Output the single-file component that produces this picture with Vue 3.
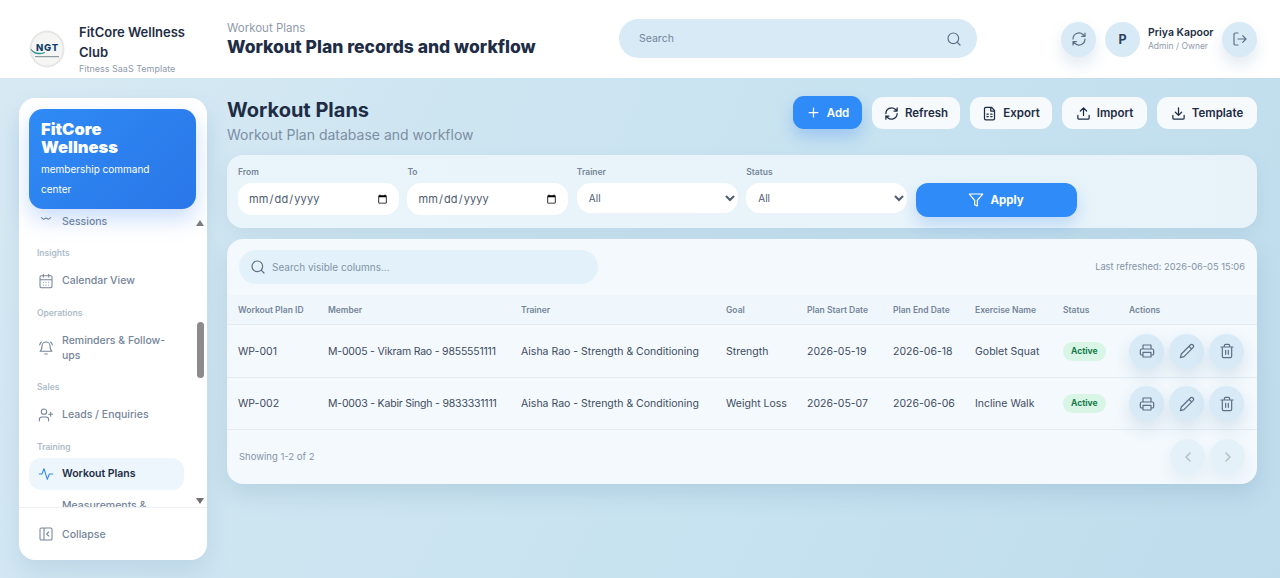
<script setup>
const navTop = [
  { label: 'Insights', items: [{ name: 'Calendar View', icon: 'calendar' }] },
  { label: 'Operations', items: [{ name: 'Reminders & Follow-ups', icon: 'bell' }] },
  { label: 'Sales', items: [{ name: 'Leads / Enquiries', icon: 'user' }] },
  { label: 'Training', items: [{ name: 'Workout Plans', icon: 'pulse', active: true }, { name: 'Measurements & Progress', icon: 'ruler' }] }
]

const actions = [
  { name: 'Refresh', icon: 'refresh' },
  { name: 'Export', icon: 'file' },
  { name: 'Import', icon: 'upload' },
  { name: 'Template', icon: 'download' }
]

const columns = ['Workout Plan ID', 'Member', 'Trainer', 'Goal', 'Plan Start Date', 'Plan End Date', 'Exercise Name', 'Status', 'Actions']

const rows = [
  { id: 'WP-001', member: 'M-0005 - Vikram Rao - 9855551111', trainer: 'Aisha Rao - Strength & Conditioning', goal: 'Strength', start: '2026-05-19', end: '2026-06-18', exercise: 'Goblet Squat', status: 'Active' },
  { id: 'WP-002', member: 'M-0003 - Kabir Singh - 9833331111', trainer: 'Aisha Rao - Strength & Conditioning', goal: 'Weight Loss', start: '2026-05-07', end: '2026-06-06', exercise: 'Incline Walk', status: 'Active' }
]

// 图标路径
const ICONS = {
  sessions: 'M5 17.500l3.500 2.500 3.500-2 3.500 2 3.500-2.500',
  calendar: 'M8 2v4M16 2v4M3 10h18M5 4h14a2 2 0 0 1 2 2v14a2 2 0 0 1-2 2H5a2 2 0 0 1-2-2V6a2 2 0 0 1 2-2zM8 14h.01M12 14h.01M16 14h.01M8 18h.01M12 18h.01M16 18h.01',
  bell: 'M6 9a6 6 0 0 1 12 0c0 5 1.500 7 3 8H3c1.500-1 3-3 3-8zM10 21h4M2.500 7.500A9 9 0 0 1 5 3M21.500 7.500A9 9 0 0 0 19 3',
  user: 'M16 21v-2a4 4 0 0 0-4-4H6a4 4 0 0 0-4 4v2M9 11a4 4 0 1 0 0-8 4 4 0 0 0 0 8zM19 8v6M22 11h-6',
  pulse: 'M2 12h4l3-8 5 16 3-8h5',
  ruler: 'M4 16 16 4l4 4L8 20zM8 12l2 2M11 9l2 2',
  refresh: 'M3 12a9 9 0 0 1 15-6.700L21 8M21 3v5h-5M21 12a9 9 0 0 1-15 6.700L3 16M3 21v-5h5',
  file: 'M15 2H6a2 2 0 0 0-2 2v16a2 2 0 0 0 2 2h12a2 2 0 0 0 2-2V7zM14 2v6h6M8 13h2M14 13h2M8 17h2M14 17h2',
  upload: 'M21 15v4a2 2 0 0 1-2 2H5a2 2 0 0 1-2-2v-4M17 8l-5-5-5 5M12 3v12',
  download: 'M21 15v4a2 2 0 0 1-2 2H5a2 2 0 0 1-2-2v-4M7 10l5 5 5-5M12 15V3',
  search: 'M11 19a8 8 0 1 0 0-16 8 8 0 0 0 0 16zM21 21l-4.300-4.300',
  logout: 'M9 21H5a2 2 0 0 1-2-2V5a2 2 0 0 1 2-2h4M16 17l5-5-5-5M21 12H9',
  filter: 'M22 3H2l8 9.500V19l4 2v-8.500z',
  plus: 'M5 12h14M12 5v14',
  printer: 'M6 9V3h12v6M6 18H4a2 2 0 0 1-2-2v-5a2 2 0 0 1 2-2h16a2 2 0 0 1 2 2v5a2 2 0 0 1-2 2h-2M6 14h12v7H6z',
  pencil: 'M17 3a2.800 2.800 0 0 1 4 4L7.500 20.500 2 22l1.500-5.500zM15 5l4 4',
  trash: 'M3 6h18M19 6v14a2 2 0 0 1-2 2H7a2 2 0 0 1-2-2V6M8 6V4a2 2 0 0 1 2-2h4a2 2 0 0 1 2 2v2M10 11v6M14 11v6',
  collapse: 'M5 3h14a2 2 0 0 1 2 2v14a2 2 0 0 1-2 2H5a2 2 0 0 1-2-2V5a2 2 0 0 1 2-2zM9 3v18M16 15l-3-3 3-3',
  left: 'M15 18l-6-6 6-6',
  right: 'M9 18l6-6-6-6'
}
</script>

<template>
  <div class="page">
    <header class="topbar">
      <div class="brand">
        <svg class="logo" viewBox="0 0 36 38">
          <ellipse cx="18" cy="19" rx="17.500" ry="18.500" fill="#e6e6e6" />
          <ellipse cx="18" cy="19" rx="15.500" ry="16.500" fill="#f5f5f3" />
          <text x="18.500" y="21" text-anchor="middle" class="logo-text">NGT</text>
          <path d="M2 19c2 4 9 5 14 3.500-5 2.500-12 2-14-3.500z" fill="#1b8b8b" stroke="#1b8b8b" stroke-width=".6" />
          <rect x="6" y="26" width="24" height="1.200" fill="#8a9aa0" />
        </svg>
        <div class="brand-text">
          <div class="brand-name">FitCore Wellness Club</div>
          <div class="brand-sub">Fitness SaaS Template</div>
        </div>
      </div>
      <div class="heading">
        <div class="crumb">Workout Plans</div>
        <div class="heading-title">Workout Plan records and workflow</div>
      </div>
      <div class="top-search">
        <span>Search</span>
        <svg class="icon" viewBox="0 0 24 24"><path :d="ICONS.search" /></svg>
      </div>
      <div class="top-right">
        <button class="circle shadow"><svg class="icon" viewBox="0 0 24 24"><path :d="ICONS.refresh" /></svg></button>
        <div class="avatar">P</div>
        <div class="who">
          <div class="who-name">Priya Kapoor</div>
          <div class="who-role">Admin / Owner</div>
        </div>
        <button class="circle shadow"><svg class="icon" viewBox="0 0 24 24"><path :d="ICONS.logout" /></svg></button>
      </div>
    </header>

    <div class="body">
      <aside class="sidebar">
        <div class="promo">
          <div class="promo-title">FitCore Wellness</div>
          <div class="promo-sub">membership command center</div>
        </div>
        <div class="nav-wrap">
          <nav class="nav">
            <div class="nav-item first">
              <svg class="nav-icon" viewBox="0 0 24 24"><path :d="ICONS.sessions" /></svg>
              <span>Sessions</span>
            </div>
            <template v-for="group in navTop" :key="group.label">
              <div class="nav-label">{{ group.label }}</div>
              <div v-for="item in group.items" :key="item.name" class="nav-item" :class="{ active: item.active }">
                <svg class="nav-icon" viewBox="0 0 24 24"><path :d="ICONS[item.icon]" /></svg>
                <span>{{ item.name }}</span>
              </div>
            </template>
          </nav>
          <div class="scroll-up"></div>
          <div class="scroll-thumb"></div>
          <div class="scroll-down"></div>
        </div>
        <div class="side-foot">
          <svg class="nav-icon" viewBox="0 0 24 24"><path :d="ICONS.collapse" /></svg>
          <span>Collapse</span>
        </div>
      </aside>

      <main class="content">
        <div class="title-row">
          <div>
            <h1>Workout Plans</h1>
            <p>Workout Plan database and workflow</p>
          </div>
          <div class="actions">
            <button class="btn primary">
              <svg class="btn-icon" viewBox="0 0 24 24"><path :d="ICONS.plus" /></svg>Add
            </button>
            <button v-for="a in actions" :key="a.name" class="btn">
              <svg class="btn-icon" viewBox="0 0 24 24"><path :d="ICONS[a.icon]" /></svg>{{ a.name }}
            </button>
          </div>
        </div>

        <section class="filters">
          <label class="field"><span>From</span><input type="date" /></label>
          <label class="field"><span>To</span><input type="date" /></label>
          <label class="field"><span>Trainer</span><select><option>All</option></select></label>
          <label class="field"><span>Status</span><select><option>All</option></select></label>
          <button class="apply">
            <svg class="apply-icon" viewBox="0 0 24 24"><path :d="ICONS.filter" /></svg>Apply
          </button>
        </section>

        <section class="table-card">
          <div class="table-top">
            <div class="table-search">
              <svg class="icon" viewBox="0 0 24 24"><path :d="ICONS.search" /></svg>
              <span>Search visible columns...</span>
            </div>
            <div class="refreshed">Last refreshed: 2026-06-05 15:06</div>
          </div>
          <table>
            <colgroup>
              <col style="width: 90px" /><col style="width: 193px" /><col style="width: 205px" />
              <col style="width: 81px" /><col style="width: 86px" /><col style="width: 82px" />
              <col style="width: 88px" /><col style="width: 66px" /><col />
            </colgroup>
            <thead>
              <tr><th v-for="c in columns" :key="c">{{ c }}</th></tr>
            </thead>
            <tbody>
              <tr v-for="r in rows" :key="r.id">
                <td>{{ r.id }}</td>
                <td class="member">{{ r.member }}</td>
                <td>{{ r.trainer }}</td>
                <td>{{ r.goal }}</td>
                <td>{{ r.start }}</td>
                <td>{{ r.end }}</td>
                <td>{{ r.exercise }}</td>
                <td><span class="badge">{{ r.status }}</span></td>
                <td>
                  <div class="row-actions">
                    <button class="circle shadow"><svg class="icon" viewBox="0 0 24 24"><path :d="ICONS.printer" /></svg></button>
                    <button class="circle shadow"><svg class="icon" viewBox="0 0 24 24"><path :d="ICONS.pencil" /></svg></button>
                    <button class="circle shadow"><svg class="icon" viewBox="0 0 24 24"><path :d="ICONS.trash" /></svg></button>
                  </div>
                </td>
              </tr>
            </tbody>
          </table>
          <div class="table-foot">
            <span>Showing 1-2 of 2</span>
            <div class="pager">
              <button class="circle faded"><svg class="icon" viewBox="0 0 24 24"><path :d="ICONS.left" /></svg></button>
              <button class="circle faded"><svg class="icon" viewBox="0 0 24 24"><path :d="ICONS.right" /></svg></button>
            </div>
          </div>
        </section>
      </main>
    </div>
  </div>
</template>

<style scoped>
.page {
  height: 578px;
  overflow: hidden;
  font-family: Inter, "Open Sans", sans-serif;
  color: #1e2d45;
  background: linear-gradient(115deg, #d8eaf4 0%, #cde5f1 35%, #c6e2f0 65%, #bfdcec 100%);
}

.icon {
  width: 16px;
  height: 16px;
  fill: none;
  stroke: currentColor;
  stroke-width: 1.800;
  stroke-linecap: round;
  stroke-linejoin: round;
}

/* 顶栏 */
.topbar {
  height: 78px;
  background: #fff;
  display: flex;
  align-items: center;
  padding: 0 23px 0 29px;
  box-sizing: border-box;
}

.brand {
  width: 198px;
  align-self: stretch;
  display: flex;
  align-items: flex-start;
  gap: 14px;
  flex-shrink: 0;
}

.logo {
  width: 36px;
  height: 38px;
  flex-shrink: 0;
  margin-top: 30px;
}

.logo-text {
  font-size: 9.500px;
  font-weight: 800;
  letter-spacing: 0.8px;
  fill: #123f6b;
}

.brand-text {
  width: 118px;
  margin-top: 22px;
}

.brand-name {
  font-size: 13px;
  font-weight: 600;
  line-height: 20px;
}

.brand-sub {
  font-size: 9px;
  line-height: 14px;
  color: #8f9bac;
  white-space: nowrap;
}

.heading {
  width: 392px;
  flex-shrink: 0;
  padding-top: 2px;
}

.crumb {
  font-size: 11.500px;
  line-height: 14px;
  color: #8f9bac;
}

.heading-title {
  font-size: 17.500px;
  font-weight: 800;
  line-height: 24px;
  white-space: nowrap;
}

.top-search {
  width: 358px;
  height: 39px;
  margin-top: -1px;
  border-radius: 20px;
  background: #d7eaf6;
  display: flex;
  align-items: center;
  justify-content: space-between;
  padding: 0 15px 0 20px;
  box-sizing: border-box;
  font-size: 10.500px;
  color: #74869b;
  flex-shrink: 0;
}

.top-search .icon {
  color: #5f7186;
}

.top-right {
  margin-left: auto;
  display: flex;
  align-items: center;
}

.circle {
  width: 35px;
  height: 35px;
  border: none;
  border-radius: 50%;
  background: #d7eaf6;
  color: #5f6f84;
  padding: 0;
  display: flex;
  align-items: center;
  justify-content: center;
  flex-shrink: 0;
}

.shadow {
  box-shadow: 0 8px 16px rgba(70, 120, 160, 0.16);
}

.avatar {
  width: 35px;
  height: 35px;
  margin-left: 9px;
  border-radius: 50%;
  background: #d7eaf6;
  display: flex;
  align-items: center;
  justify-content: center;
  font-size: 12.500px;
  font-weight: 700;
  color: #2c4160;
}

.who {
  margin: 0 8px 0 8px;
  width: 66px;
}

.who-name {
  font-size: 10.500px;
  font-weight: 600;
  line-height: 14px;
  white-space: nowrap;
}

.who-role {
  font-size: 8.500px;
  line-height: 13px;
  color: #8f9bac;
  white-space: nowrap;
}

/* 主体 */
.body {
  display: flex;
  align-items: flex-start;
  padding: 20px 23px 0 19px;
  gap: 20px;
}

.sidebar {
  width: 188px;
  height: 462px;
  background: #fff;
  border-radius: 16px;
  box-shadow: 0 12px 24px rgba(70, 120, 160, 0.14);
  display: flex;
  flex-direction: column;
  flex-shrink: 0;
  position: relative;
}

.promo {
  margin: 11px 11px 0 10px;
  height: 100px;
  flex-shrink: 0;
  box-sizing: border-box;
  padding: 12px 12px;
  border-radius: 14px;
  background: linear-gradient(135deg, #2f8bf5 0%, #2a76e8 100%);
  box-shadow: 0 10px 22px rgba(47, 125, 240, 0.26);
  color: #fff;
  position: relative;
  z-index: 1;
}

.promo-title {
  font-size: 16.500px;
  font-weight: 900;
  line-height: 17.500px;
  width: 100px;
}

.promo-sub {
  margin-top: 3px;
  font-size: 10px;
  line-height: 20px;
  width: 130px;
}

.nav-wrap {
  flex: 1;
  min-height: 0;
  position: relative;
  overflow: hidden;
}

.nav {
  padding: 0 23px 0 10px;
}

.nav-item {
  display: flex;
  align-items: center;
  gap: 8px;
  padding: 8px 9px;
  min-height: 32px;
  box-sizing: border-box;
  border-radius: 12px;
  font-size: 10.500px;
  font-weight: 500;
  line-height: 15px;
  color: #75859a;
}

/* 第一项的图标被上方卡片遮住 */
.nav-item.first {
  height: 46px;
  margin-top: -18.500px;
  align-items: flex-end;
}

.nav-item.active {
  margin-top: -1px;
  background: #edf6fc;
  color: #1e2d45;
  font-weight: 600;
}

.nav-item.active .nav-icon {
  color: #2f86f2;
}

.nav-icon {
  width: 16px;
  height: 16px;
  flex-shrink: 0;
  fill: none;
  stroke: currentColor;
  stroke-width: 1.600;
  stroke-linecap: round;
  stroke-linejoin: round;
}

.nav-item.first .nav-icon {
  margin-bottom: 7px;
}

.nav-label {
  margin: 10px 0 6px 8px;
  font-size: 8.500px;
  line-height: 12px;
  font-weight: 600;
  color: #aebbca;
}

.scroll-up,
.scroll-down {
  position: absolute;
  right: 3px;
  width: 0;
  height: 0;
  border-left: 4px solid transparent;
  border-right: 4px solid transparent;
}

.scroll-up {
  top: 11px;
  border-bottom: 6px solid #7d7d7d;
}

.scroll-down {
  bottom: 3px;
  border-top: 6px solid #6f6f6f;
}

.scroll-thumb {
  position: absolute;
  right: 3px;
  top: 113px;
  width: 7px;
  height: 56px;
  border-radius: 4px;
  background: #8b8b8b;
}

.side-foot {
  height: 52px;
  flex-shrink: 0;
  border-top: 1px solid #edf1f5;
  display: flex;
  align-items: center;
  gap: 8px;
  padding: 0 19px;
  font-size: 10.500px;
  font-weight: 500;
  color: #75859a;
}

/* 内容区 */
.content {
  flex: 1;
  min-width: 0;
}

.title-row {
  display: flex;
  justify-content: space-between;
  align-items: flex-start;
  height: 57px;
}

h1 {
  margin: -1px 0 0;
  font-size: 20px;
  font-weight: 700;
  line-height: 26px;
}

.title-row p {
  margin: 2px 0 0;
  font-size: 14px;
  line-height: 20px;
  color: #7d8ea3;
}

.actions {
  display: grid;
  grid-template-columns: 69px 88px 82px 85px 100px;
  gap: 10px;
  margin-top: -1px;
}

.btn {
  height: 32px;
  border: none;
  border-radius: 11px;
  padding: 0;
  background: #f6fafd;
  color: #1e2d45;
  font-family: inherit;
  font-size: 11.500px;
  font-weight: 600;
  display: flex;
  align-items: center;
  justify-content: center;
  gap: 6px;
}

.btn.primary {
  height: 33px;
  margin-top: -1px;
  background: #2f8bf8;
  color: #fff;
  box-shadow: 0 8px 16px rgba(47, 125, 240, 0.28);
}

.btn-icon {
  width: 15px;
  height: 15px;
  fill: none;
  stroke: currentColor;
  stroke-width: 2;
  stroke-linecap: round;
  stroke-linejoin: round;
}

.filters {
  height: 73px;
  box-sizing: border-box;
  margin-bottom: 11px;
  padding: 12px 11px 0;
  border-radius: 16px;
  background: linear-gradient(90deg, #eaf5fb, #e7f3f9);
  box-shadow: 0 6px 16px rgba(70, 120, 160, 0.1);
  display: grid;
  grid-template-columns: repeat(6, 1fr);
  column-gap: 8.500px;
  align-items: start;
}

.field {
  display: flex;
  flex-direction: column;
  gap: 5px;
}

.field span {
  font-size: 8.500px;
  line-height: 11px;
  font-weight: 600;
  color: #75859a;
}

.field input,
.field select {
  width: 100%;
  box-sizing: border-box;
  border: none;
  background: #fff;
  font-family: inherit;
  color: #4d5c70;
  outline: none;
}

.field input {
  height: 32px;
  border-radius: 14px;
  padding: 0 9px 0 10px;
  font-size: 11px;
  letter-spacing: 0.1px;
}

.field select {
  height: 30px;
  border-radius: 14px;
  padding: 0 8px;
  font-size: 10px;
}

.apply {
  margin-top: 16px;
  height: 34px;
  border: none;
  border-radius: 12px;
  background: #2f8bf8;
  color: #fff;
  font-family: inherit;
  font-size: 11.500px;
  font-weight: 700;
  display: flex;
  align-items: center;
  justify-content: center;
  gap: 6px;
  box-shadow: 0 8px 16px rgba(47, 125, 240, 0.22);
}

.apply-icon {
  width: 16px;
  height: 16px;
  fill: none;
  stroke: currentColor;
  stroke-width: 1.800;
  stroke-linejoin: round;
}

.table-card {
  height: 245px;
  border-radius: 16px;
  background: #f3f9fd;
  box-shadow: 0 10px 22px rgba(60, 110, 150, 0.16);
  overflow: hidden;
}

.table-top {
  height: 56px;
  padding: 11px 12px 0;
  box-sizing: border-box;
  display: flex;
  justify-content: space-between;
  align-items: flex-start;
}

.table-search {
  width: 359px;
  height: 34px;
  box-sizing: border-box;
  border-radius: 17px;
  background: #e2f1fa;
  display: flex;
  align-items: center;
  gap: 6px;
  padding: 0 11px;
  font-size: 10px;
  color: #8493a6;
}

.table-search .icon {
  color: #5f7186;
}

.refreshed {
  font-size: 9.300px;
  line-height: 34px;
  color: #8493a6;
}

table {
  width: 100%;
  table-layout: fixed;
  border-collapse: collapse;
}

th {
  height: 29px;
  padding: 0 0 0 11px;
  text-align: left;
  font-size: 8.500px;
  font-weight: 600;
  color: #75859a;
  background: #eff7fc;
  border-bottom: 1px solid #e2ebf2;
  white-space: nowrap;
}

td {
  height: 52.500px;
  padding: 1px 0 0 11px;
  font-size: 10.500px;
  color: #3f4c5f;
  border-bottom: 1px solid #e2ebf2;
  white-space: nowrap;
  box-sizing: border-box;
}

td.member {
  letter-spacing: -0.2px;
}

.badge {
  display: inline-block;
  padding: 0 8px;
  line-height: 19px;
  border-radius: 10px;
  background: #d9f5e5;
  color: #157a4c;
  font-size: 8.500px;
  font-weight: 700;
}

.row-actions {
  display: flex;
  gap: 5px;
}

.table-foot {
  height: 53px;
  display: flex;
  align-items: center;
  justify-content: space-between;
  padding: 0 12px;
  font-size: 9.500px;
  color: #8493a6;
}

.pager {
  display: flex;
  gap: 5px;
}

.circle.faded {
  background: #e5f1f9;
  color: #a9b8c7;
  box-shadow: 0 8px 16px rgba(70, 120, 160, 0.08);
}
</style>
